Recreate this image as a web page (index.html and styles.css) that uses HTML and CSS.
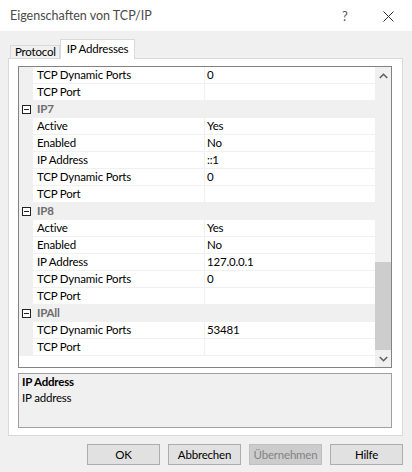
FILE: index.html
```html
<!DOCTYPE html>
<html lang="de">
<head>
	<meta charset="UTF-8">
	<title>Eigenschaften von TCP/IP</title>
	<link rel="stylesheet" href="styles.css">
</head>
<body>
	<!-- Titelleiste -->
	<div class="titlebar">
		<span class="title">Eigenschaften von TCP/IP</span>
		<span class="help">?</span>
		<span class="close">
			<svg width="11" height="11" viewBox="0 0 11 11"><path d="M0.5 0.5 L10.5 10.5 M10.5 0.5 L0.5 10.5" stroke="#333" stroke-width="1" fill="none"/></svg>
		</span>
	</div>

	<div class="dialog">
		<!-- Reiter -->
		<div class="tabs">
			<div class="tab">Protocol</div>
			<div class="tab on">IP Addresses</div>
		</div>

		<div class="page">
			<!-- Eigenschaftsraster -->
			<div class="grid">
				<div class="rows">
					<div class="row"><div class="gut"></div><div class="name">TCP Dynamic Ports</div><div class="val">0</div></div>
					<div class="row"><div class="gut"></div><div class="name">TCP Port</div><div class="val"></div></div>
					<div class="row cat"><div class="gut"><span class="minus"></span></div><div class="name">IP7</div></div>
					<div class="row"><div class="gut"></div><div class="name">Active</div><div class="val">Yes</div></div>
					<div class="row"><div class="gut"></div><div class="name">Enabled</div><div class="val">No</div></div>
					<div class="row"><div class="gut"></div><div class="name">IP Address</div><div class="val">::1</div></div>
					<div class="row"><div class="gut"></div><div class="name">TCP Dynamic Ports</div><div class="val">0</div></div>
					<div class="row"><div class="gut"></div><div class="name">TCP Port</div><div class="val"></div></div>
					<div class="row cat"><div class="gut"><span class="minus"></span></div><div class="name">IP8</div></div>
					<div class="row"><div class="gut"></div><div class="name">Active</div><div class="val">Yes</div></div>
					<div class="row"><div class="gut"></div><div class="name">Enabled</div><div class="val">No</div></div>
					<div class="row"><div class="gut"></div><div class="name">IP Address</div><div class="val">127.0.0.1</div></div>
					<div class="row"><div class="gut"></div><div class="name">TCP Dynamic Ports</div><div class="val">0</div></div>
					<div class="row"><div class="gut"></div><div class="name">TCP Port</div><div class="val"></div></div>
					<div class="row cat"><div class="gut"><span class="minus"></span></div><div class="name">IPAll</div></div>
					<div class="row"><div class="gut"></div><div class="name">TCP Dynamic Ports</div><div class="val">53481</div></div>
					<div class="row"><div class="gut"></div><div class="name">TCP Port</div><div class="val"></div></div>
				</div>
				<!-- Bildlaufleiste -->
				<div class="scroll">
					<div class="arrow">
						<svg width="9" height="6" viewBox="0 0 9 6"><path d="M0.8 5 L4.5 1.3 L8.2 5" stroke="#606060" stroke-width="1.6" fill="none"/></svg>
					</div>
					<div class="track">
						<div class="thumb"></div>
					</div>
					<div class="arrow">
						<svg width="9" height="6" viewBox="0 0 9 6"><path d="M0.8 1 L4.5 4.7 L8.2 1" stroke="#606060" stroke-width="1.6" fill="none"/></svg>
					</div>
				</div>
			</div>

			<!-- Beschreibung -->
			<div class="desc">
				<div class="desc-title">IP Address</div>
				<div>IP address</div>
			</div>
		</div>

		<!-- Schaltflächen -->
		<div class="buttons">
			<div class="btn">OK</div>
			<div class="btn">Abbrechen</div>
			<div class="btn off">Übernehmen</div>
			<div class="btn">Hilfe</div>
		</div>
	</div>
</body>
</html>
```

FILE: styles.css
```css
* {
	margin: 0;
	padding: 0;
	box-sizing: border-box;
}
body {
	width: 412px;
	height: 472px;
	overflow: hidden;
	background-color: #f0f0f0;
	font-family: Lato, "Noto Sans", sans-serif;
	font-size: 11.5px;
	letter-spacing: -0.2px;
	color: #000;
}
.titlebar {
	display: flex;
	align-items: center;
	height: 31px;
	padding-left: 10px;
	background-color: #fff;
	font-size: 12.5px;
	letter-spacing: 0;
	color: #4a4a4a;
}
.titlebar .title {
	flex: 1;
}
.titlebar .help {
	width: 41px;
	text-align: left;
	font-size: 13px;
	color: #555;
}
.titlebar .close {
	display: flex;
	width: 29px;
	padding-top: 1px;
}
.dialog {
	padding: 7px 9px 0 8px;
}
.tabs {
	display: flex;
	align-items: flex-end;
	height: 20px;
	padding-left: 2px;
}
.tab {
	height: 13px;
	line-height: 12px;
	padding: 0 3px 0 4px;
	border: 1px solid #d9d9d9;
	border-bottom: none;
	background-color: #f0f0f0;
}
.tab.on {
	height: 20px;
	line-height: 17px;
	padding: 0 6px;
	background-color: #fff;
	position: relative;
	top: 1px;
}
.page {
	height: 378px;
	padding: 7px 10px 0 9px;
	background-color: #fff;
	border: 1px solid #d9d9d9;
}
.grid {
	display: flex;
	height: 302px;
	border: 1px solid #828282;
}
.rows {
	flex: 1;
}
.row {
	display: flex;
	height: 17px;
	line-height: 16px;
}
.gut {
	width: 14px;
	background-color: #f0f0f0;
	display: flex;
	align-items: center;
	justify-content: center;
}
.name {
	width: 172px;
	padding-left: 4px;
	border-right: 1px solid #f0f0f0;
	border-bottom: 1px solid #f0f0f0;
	white-space: nowrap;
}
.val {
	flex: 1;
	padding-left: 2px;
	border-bottom: 1px solid #f0f0f0;
}
.row.cat {
	background-color: #f0f0f0;
}
.row.cat .name {
	flex: 1;
	border: none;
	font-weight: bold;
	color: #6d6d6d;
}
.minus {
	position: relative;
	width: 9px;
	height: 9px;
	border: 1px solid #222;
	background-color: #fff;
}
.minus::after {
	content: "";
	position: absolute;
	left: 1px;
	top: 3px;
	width: 5px;
	height: 1px;
	background-color: #222;
}
.scroll {
	display: flex;
	flex-direction: column;
	width: 16px;
	background-color: #f0f0f0;
}
.arrow {
	display: flex;
	align-items: center;
	justify-content: center;
	height: 17px;
}
.track {
	flex: 1;
	display: flex;
	flex-direction: column;
	justify-content: flex-end;
}
.thumb {
	height: 88px;
	background-color: #cdcdcd;
}
.desc {
	height: 55px;
	margin-top: 5px;
	padding: 0 3px;
	border: 1px solid #a0a0a0;
	background-color: #f0f0f0;
	line-height: 16px;
}
.desc-title {
	font-weight: bold;
}
.buttons {
	display: flex;
	justify-content: flex-end;
	gap: 8px;
	padding-top: 8px;
}
.btn {
	width: 73px;
	height: 21px;
	line-height: 19px;
	text-align: center;
	background-color: #e1e1e1;
	border: 1px solid #adadad;
}
.btn.off {
	color: #838383;
	background-color: #cccccc;
	border-color: #bfbfbf;
}
```
